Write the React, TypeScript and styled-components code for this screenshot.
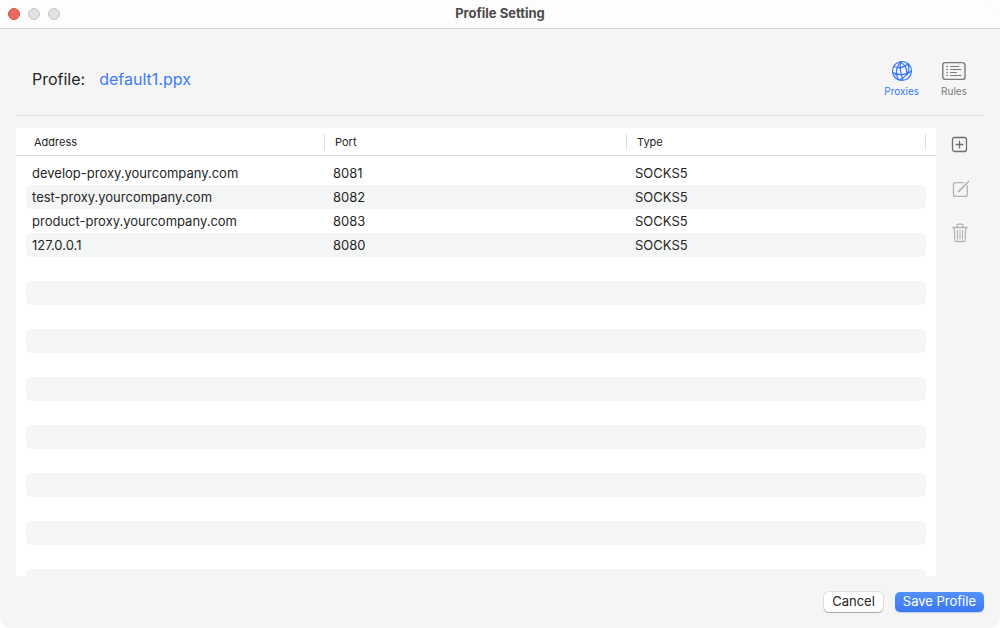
import React from "react";
import styled, { createGlobalStyle } from "styled-components";

const GlobalStyle = createGlobalStyle`
  *, *::before, *::after { box-sizing: border-box; }
  body {
    margin: 0;
    background: #fff;
    color: #262626;
    font-family: Inter, "Liberation Sans", sans-serif;
    font-size: 13px;
    line-height: 16px;
  }
  button { font: inherit; color: inherit; border: 0; padding: 0; background: none; }
`;

const Window = styled.div`
  display: flex;
  flex-direction: column;
  height: 100vh;
  border-radius: 10px;
  overflow: hidden;
  background: #f5f5f5;
`;

const TitleBar = styled.header`
  display: grid;
  grid-template-columns: 1fr auto 1fr;
  align-items: center;
  height: 29px;
  padding: 0 8px;
  background: #fdfdfd;
  border-bottom: 1px solid #d0d0d0;
`;

const WindowControls = styled.div`
  display: flex;
  gap: 8px;
`;

const WindowControl = styled.button<{ $close?: boolean }>`
  width: 12px;
  height: 12px;
  border-radius: 50%;
  border: 1px solid ${(p) => (p.$close ? "#d25245" : "#c6c6c6")};
  background: ${(p) => (p.$close ? "#ea6a5c" : "#e1e1e1")};
`;

const WindowTitle = styled.h1`
  margin: 0;
  padding-bottom: 2px;
  font-size: 13px;
  line-height: 16px;
  font-weight: 700;
  color: #4b4b4b;
`;

const ProfileBar = styled.section`
  display: flex;
  justify-content: space-between;
  align-items: center;
  height: 87px;
  margin: 0 16px;
  padding: 14px 16px 0;
  border-bottom: 1px solid #dcdcdc;
`;

const ProfileName = styled.p`
  display: flex;
  gap: 14px;
  margin: 0;
  font-size: 16px;
  line-height: 22px;
`;

const ProfileLink = styled.a`
  color: #3e7bf7;
  text-decoration: none;
`;

const Tabs = styled.nav`
  display: flex;
  gap: 21px;
`;

const Tab = styled.button<{ $active?: boolean }>`
  display: flex;
  flex-direction: column;
  align-items: center;
  gap: 2px;
  min-width: 28px;
  font-size: 10px;
  line-height: 14px;
  color: ${(p) => (p.$active ? "#3478f6" : "#7b7b7b")};
  svg { display: block; }
`;

const Content = styled.main`
  display: flex;
  flex: 1;
  min-height: 0;
  padding: 12px 0 0 16px;
`;

const TablePanel = styled.div`
  flex: 1;
  min-width: 0;
  overflow: hidden;
  background: #fff;
`;

const ProxyTable = styled.table`
  display: block;
`;

const TableHead = styled.thead`
  display: block;
  padding: 0 10px;
  border-bottom: 1px solid #e0e0e0;
`;

const TableBody = styled.tbody`
  display: block;
  padding: 5px 10px 0;
`;

const Row = styled.tr`
  display: grid;
  grid-template-columns: 299fr 302fr 299fr;
  align-items: center;
  height: 24px;
  border-radius: 5px;
  ${TableBody} &:nth-child(even) { background: #f4f5f5; }
  ${TableHead} & { height: 27px; }
`;

const HeadCell = styled.th`
  padding: 0 10px;
  border-right: 1px solid #dfdfdf;
  font-size: 11px;
  line-height: 16px;
  font-weight: 400;
  text-align: left;
  &:first-child { padding-left: 8px; }
`;

const Cell = styled.td`
  padding: 0 8px;
  overflow: hidden;
  white-space: nowrap;
  text-overflow: ellipsis;
  &:first-child { padding-left: 6px; }
`;

const Tools = styled.aside`
  display: flex;
  flex-direction: column;
  align-items: center;
  gap: 24px;
  width: 48px;
  flex: none;
  margin-right: 16px;
  padding-top: 7px;
`;

const Tool = styled.button`
  display: block;
  width: 20px;
  height: 20px;
  color: #6e6e6e;
  &:disabled { color: #b4b4b4; }
  svg { display: block; }
`;

const Footer = styled.footer`
  display: flex;
  justify-content: flex-end;
  align-items: center;
  gap: 12px;
  height: 52px;
  padding: 0 16px;
`;

const PushButton = styled.button<{ $primary?: boolean }>`
  height: 20px;
  padding: 0 8px 2px;
  border-radius: 5px;
  line-height: 18px;
  white-space: nowrap;
  color: ${(p) => (p.$primary ? "#fff" : "#262626")};
  background: ${(p) => (p.$primary ? "linear-gradient(#5291f9, #3c78f6)" : "#fff")};
  box-shadow: ${(p) =>
    p.$primary
      ? "0 1px 1px rgba(60, 120, 246, 0.3)"
      : "0 0 0 1px rgba(0, 0, 0, 0.08), 0 1px 1px rgba(0, 0, 0, 0.25)"};
`;

const NetworkIcon = () => (
  <svg width="22" height="22" viewBox="0 0 22 22" fill="none" stroke="currentColor" strokeWidth="1.2" strokeLinecap="round" aria-hidden="true">
    <circle cx="11" cy="11" r="9.5" />
    <path d="M9.500 2C6.500 5.500 5 9.500 5.500 14.500" />
    <path d="M9.500 2C13.500 4.500 16 9 16 14" />
    <path d="M9.500 2C9 7 9.500 14 12 20" />
    <path d="M3 6.500C8 8.500 13 7.500 17.200 4" />
    <path d="M17.200 4C18.200 8 18 11.500 16 14C14 17 11 19 8 20" />
    <path d="M2 12.500C7 15.500 15 15.500 20.500 11" />
    <path d="M5.500 14.500C6 17 7 18.500 8 20" />
    <g fill="currentColor" stroke="none">
      <circle cx="5.500" cy="14.200" r="1.400" />
      <circle cx="16" cy="13.800" r="1.400" />
      <circle cx="9.300" cy="7.800" r="1.200" />
      <circle cx="17" cy="4.500" r="1" />
    </g>
  </svg>
);

const RulesIcon = () => (
  <svg width="24" height="22" viewBox="0 0 24 22" fill="none" stroke="currentColor" strokeWidth="1.4" strokeLinecap="round" aria-hidden="true">
    <rect x="0.800" y="2.600" width="22.200" height="16.800" rx="2.500" />
    <path d="M8.500 6.500H16.500M8.500 9.500H19M8.500 12.500H14.500M8.500 15.500H19" strokeWidth="1.1" />
    <path d="M5 6.500H5.200M5 9.500H5.200M5 12.500H5.200M5 15.500H5.200" strokeWidth="1.500" />
  </svg>
);

const AddIcon = () => (
  <svg width="20" height="20" viewBox="0 0 20 20" fill="none" stroke="currentColor" strokeWidth="1.3" strokeLinecap="round" aria-hidden="true">
    <rect x="2.500" y="2.500" width="14" height="14" rx="2" />
    <path d="M9.500 6.200V12.800M6.200 9.500H12.800" />
  </svg>
);

const EditIcon = () => (
  <svg width="20" height="20" viewBox="0 0 20 20" fill="none" stroke="currentColor" strokeWidth="1.3" strokeLinecap="round" strokeLinejoin="round" aria-hidden="true">
    <path d="M13.500 3.600H5.500C4.200 3.600 3.500 4.300 3.500 5.600V15.400C3.500 16.700 4.200 17.400 5.500 17.400H15.300C16.600 17.400 17.300 16.700 17.300 15.400V7" />
    <path d="M9.300 11.800L17.200 3.800" strokeWidth="1.700" />
    <path d="M8.600 12.600L9.500 11.600M18.300 2.700L18.600 2.400" strokeWidth="1.500" />
  </svg>
);

const TrashIcon = () => (
  <svg width="20" height="20" viewBox="0 0 20 20" fill="none" stroke="currentColor" strokeWidth="1.300" strokeLinecap="round" strokeLinejoin="round" aria-hidden="true">
    <path d="M2.700 4.500H17.300" />
    <path d="M7 4.500V2.600C7 1.700 7.500 1.200 8.400 1.200H11.600C12.500 1.200 13 1.700 13 2.600V4.500" />
    <path d="M4.200 4.700L4.900 17C5 18 5.600 18.500 6.700 18.500H13.300C14.400 18.500 15 18 15.100 17L15.800 4.700" />
    <path d="M7.300 7.300L7.600 16M10 7.300V16M12.700 7.300L12.400 16" strokeWidth="1.100" />
  </svg>
);

interface Proxy {
  address: string;
  port: number;
  type: string;
}

const proxies: Proxy[] = [
  { address: "develop-proxy.yourcompany.com", port: 8081, type: "SOCKS5" },
  { address: "test-proxy.yourcompany.com", port: 8082, type: "SOCKS5" },
  { address: "product-proxy.yourcompany.com", port: 8083, type: "SOCKS5" },
  { address: "127.0.0.1", port: 8080, type: "SOCKS5" },
];

// Blank rows continue the striping down to the bottom of the panel.
const blankRows = Array.from({ length: 40 }, (_, i) => i);

export default function App() {
  return (
    <>
      <GlobalStyle />
      <Window>
        <TitleBar>
          <WindowControls>
            <WindowControl $close aria-label="Close" />
            <WindowControl aria-label="Minimize" />
            <WindowControl aria-label="Zoom" />
          </WindowControls>
          <WindowTitle>Profile Setting</WindowTitle>
        </TitleBar>
        <ProfileBar>
          <ProfileName>
            <span>Profile:</span>
            <ProfileLink href="#profile">default1.ppx</ProfileLink>
          </ProfileName>
          <Tabs>
            <Tab $active><NetworkIcon />Proxies</Tab>
            <Tab><RulesIcon />Rules</Tab>
          </Tabs>
        </ProfileBar>
        <Content>
          <TablePanel>
            <ProxyTable>
              <TableHead>
                <Row>
                  <HeadCell scope="col">Address</HeadCell>
                  <HeadCell scope="col">Port</HeadCell>
                  <HeadCell scope="col">Type</HeadCell>
                </Row>
              </TableHead>
              <TableBody>
                {proxies.map((p) => (
                  <Row key={p.address}>
                    <Cell>{p.address}</Cell>
                    <Cell>{p.port}</Cell>
                    <Cell>{p.type}</Cell>
                  </Row>
                ))}
                {blankRows.map((i) => (
                  <Row key={i} aria-hidden="true" />
                ))}
              </TableBody>
            </ProxyTable>
          </TablePanel>
          <Tools>
            <Tool aria-label="Add proxy"><AddIcon /></Tool>
            <Tool aria-label="Edit proxy" disabled><EditIcon /></Tool>
            <Tool aria-label="Delete proxy" disabled><TrashIcon /></Tool>
          </Tools>
        </Content>
        <Footer>
          <PushButton>Cancel</PushButton>
          <PushButton $primary>Save Profile</PushButton>
        </Footer>
      </Window>
    </>
  );
}
